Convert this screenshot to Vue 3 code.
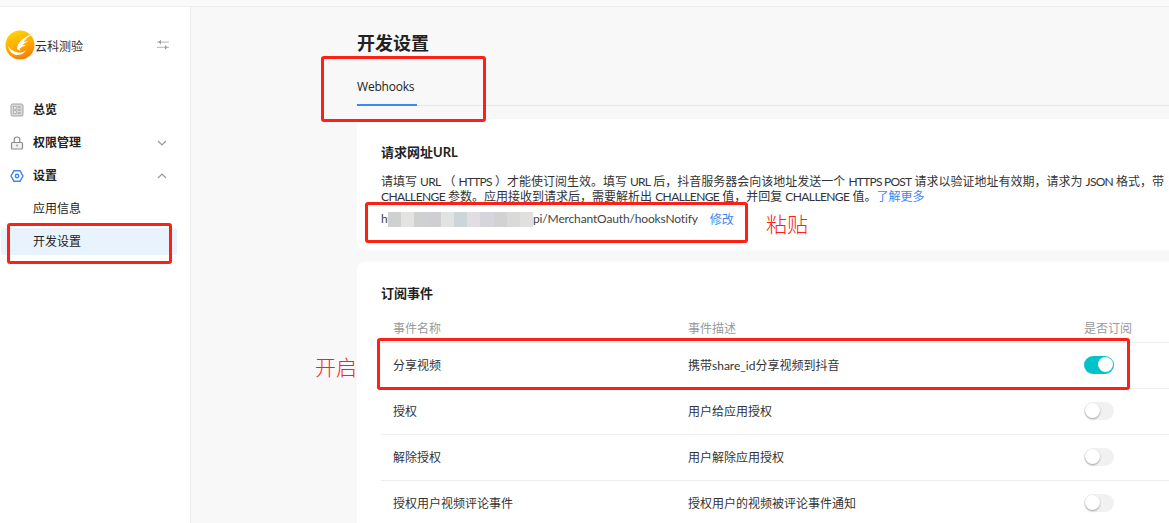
<script setup>
const mosaic = ['#cfd0d0', '#e3e4e2', '#cfd0d0', '#d0ced3', '#e1e3e1', '#ccd6d8', '#e2dde2', '#d7d5dc', '#d2d2d2', '#dadada', '#e0e0de']
const rows = [
  { name: '分享视频', desc: '携带share_id分享视频到抖音', on: true },
  { name: '授权', desc: '用户给应用授权', on: false },
  { name: '解除授权', desc: '用户解除应用授权', on: false },
  { name: '授权用户视频评论事件', desc: '授权用户的视频被评论事件通知', on: false }
]
</script>

<template>
  <div class="page">
    <div class="topbar"></div>
    <div class="body">
      <aside class="side">
        <div class="brand">
          <svg class="logo" viewBox="0 0 30 30" width="30" height="30">
            <defs>
              <linearGradient id="lg" x1="0.3" y1="0" x2="0.7" y2="1">
                <stop offset="0" stop-color="#ffd400" />
                <stop offset="0.55" stop-color="#ffa800" />
                <stop offset="1" stop-color="#f47a00" />
              </linearGradient>
            </defs>
            <circle cx="15" cy="15" r="14.500" fill="url(#lg)" />
            <path d="M3 16c3 4 6 6 10 6.500 3 .3 6-.5 8-2-2 3-5.500 5-9.500 4.500C7.500 24.500 4 21 3 16z" fill="#fff" />
            <path d="M12 19c0-6 5-11 15-15-4 3-7 5.500-8.500 8.500 1.500-.8 3-1.200 5-1.200-2.500 1-4.500 2.200-6 3.700 1.200 0 2.500 0 3.500 .5-2.500 .5-5 1.500-6.500 3.500 1 .6 1 1.200 .5 1.700-1.500-.4-3-1.200-3-2.700z" fill="#fff" />
          </svg>
          <span class="brand-name">云科测验</span>
          <svg class="swap" viewBox="0 0 14 12" width="14" height="12">
            <path d="M1 2.500h12v1.200H1zM1 7.800h12V9H1z" fill="#c4c4c4" />
            <path d="M2.500 3.100L5 .8v4.600zM11.500 8.400L9 6.100v4.600z" fill="#9a9a9a" />
          </svg>
        </div>
        <nav class="menu">
          <div class="item strong">
            <svg class="ico" viewBox="0 0 14 14" width="14" height="14">
              <rect x="1" y="1" width="12" height="12" rx="1.500" fill="#d9d9d9" stroke="#a3a3a3" />
              <path d="M3.500 3.500h2.800v2.800H3.500zM3.500 7.700h2.800v2.800H3.500z" fill="#f4f4f4" stroke="#8f8f8f" stroke-width=".6" />
              <path d="M7.800 4h2.800M7.800 7h2.800M7.800 10h2.800" stroke="#8f8f8f" />
            </svg>
            <span>总览</span>
          </div>
          <div class="item strong">
            <svg class="ico" viewBox="0 0 14 14" width="14" height="14" fill="none" stroke="#8c8c8c" stroke-width="1.200">
              <rect x="1.500" y="6.500" width="11" height="6.500" rx="1" fill="#f2f2f2" />
              <path d="M4.200 6.500V3.800a2.800 2.800 0 0 1 5.600 0v2.700" />
              <path d="M7 8.500v2" />
            </svg>
            <span>权限管理</span>
            <svg class="chev" viewBox="0 0 10 6" width="10" height="6" fill="none" stroke="#9a9a9a" stroke-width="1.200"><path d="M1 1l4 4 4-4" /></svg>
          </div>
          <div class="item strong">
            <svg class="ico" viewBox="0 0 14 14" width="14" height="14" fill="none" stroke="#3e86f5" stroke-width="1.400">
              <path d="M4 1.800h6L13 7l-3 5.200H4L1 7z" />
              <circle cx="7" cy="7" r="1.700" />
            </svg>
            <span>设置</span>
            <svg class="chev" viewBox="0 0 10 6" width="10" height="6" fill="none" stroke="#9a9a9a" stroke-width="1.200"><path d="M1 5l4-4 4 4" /></svg>
          </div>
          <div class="item sub">应用信息</div>
          <div class="item sub active">开发设置</div>
        </nav>
      </aside>

      <main class="main">
        <h1 class="title">开发设置</h1>
        <div class="tabs"><span class="tab">Webhooks</span></div>

        <section class="card url-card">
          <h2 class="card-title">请求网址URL</h2>
          <p class="desc first">请填写 <span class="en">URL</span> （ <span class="en">HTTPS</span> ）才能使订阅生效。填写 <span class="en">URL</span> 后，抖音服务器会向该地址发送一个 <span class="en">HTTPS POST</span> 请求以验证地址有效期，请求为 <span class="en">JSON</span> 格式，带</p>
          <p class="desc"><span class="en">CHALLENGE</span> 参数。应用接收到请求后，需要解析出 <span class="en">CHALLENGE</span> 值，并回复 <span class="en">CHALLENGE</span> 值。<a class="link">了解更多</a></p>
          <div class="url">
            <span class="ht">ht</span>
            <span class="mosaic"><i v-for="(c, i) in mosaic" :key="i" :style="{ background: c }"></i></span>
            <span class="path">pi/MerchantOauth/hooksNotify</span>
            <a class="link edit">修改</a>
          </div>
        </section>

        <section class="card events">
          <h2 class="card-title">订阅事件</h2>
          <div class="row head">
            <span class="c1">事件名称</span><span class="c2">事件描述</span><span class="c3">是否订阅</span>
          </div>
          <div class="row" v-for="r in rows" :key="r.name">
            <span class="c1">{{ r.name }}</span>
            <span class="c2">{{ r.desc }}</span>
            <span class="c3"><span class="switch" :class="{ on: r.on }"><b></b></span></span>
          </div>
        </section>
      </main>
    </div>

    <div class="mark m1"></div>
    <div class="mark m2"></div>
    <div class="mark m3"></div>
    <div class="mark m4"></div>
    <span class="note n1">粘贴</span>
    <span class="note n2">开启</span>
  </div>
</template>

<style>
html, body { margin: 0; background: #fff; overflow: hidden; }
</style>

<style scoped>
.page {
  position: relative;
  width: 1169px;
  height: 523px;
  overflow: hidden;
  font-family: Lato, "Noto Sans CJK SC", sans-serif;
  font-size: 12px;
  color: #222;
  background: #f8f8f8;
}
.topbar { height: 6px; background: #fafafa; border-bottom: 1px solid #eeeeee; }
.body { display: flex; height: 516px; }
.side {
  width: 191px;
  flex: none;
  box-sizing: border-box;
  background: #fff;
  border-right: 1px solid #eeeeee;
}
.brand { display: flex; align-items: center; height: 30px; margin-top: 23px; padding: 0 20px 0 5px; }
.logo { flex: none; }
.brand-name { flex: 1; color: #333; }
.menu { margin-top: 33px; padding: 0 13px 0 1px; }
.item { display: flex; align-items: center; height: 33px; box-sizing: border-box; padding-left: 9px; color: #222; }
.item.strong { font-weight: 700; }
.ico { margin-right: 9px; flex: none; }
.item span { flex: 1; padding-bottom: 2px; }
.chev { margin-right: 10px; }
.item.sub { padding-left: 32px; padding-bottom: 2px; }
.item.active { height: 27px; margin-top: 3px; background: #e9f3fd; border-radius: 3px; }
.main { flex: 1; min-width: 0; padding-left: 166px; }
.title { margin: 0; padding-top: 25px; font-size: 18px; line-height: 22px; font-weight: 700; color: #222; height: 22px; }
.tabs { margin-top: 15px; height: 37px; box-sizing: border-box; border-bottom: 1px solid #e8e8e8; }
.tab { display: inline-block; height: 37px; box-sizing: border-box; padding-top: 9px; line-height: 17px; width: 60px; border-bottom: 2px solid #3e86f5; font-family: "Open Sans", sans-serif; font-size: 12px; letter-spacing: -0.2px; color: #222; white-space: nowrap; }
.card { background: #fff; border-radius: 8px 0 0 8px; padding-left: 24px; }
.url-card { margin-top: 13px; height: 131px; box-sizing: border-box; padding-top: 24px; }
.card-title { margin: 0 0 13px; font-size: 13px; line-height: 18px; font-weight: 700; color: #222; }
.desc { margin: 0; line-height: 15px; white-space: nowrap; color: #333; }
.en { letter-spacing: -0.6px; }
.first .en { letter-spacing: -0.75px; }
.link { color: #3e86f5; }
.url { display: flex; align-items: center; height: 18px; margin-top: 6px; color: #444; white-space: nowrap; }
.ht { width: 7px; padding-bottom: 2px; }
.mosaic { display: flex; width: 145px; height: 15px; }
.mosaic i { flex: 1; display: block; }
.path { letter-spacing: -0.15px; padding-bottom: 2px; }
.edit { margin-left: 12px; padding-bottom: 2px; }
.events { margin-top: 12px; height: 300px; box-sizing: border-box; padding-top: 22px; }
.events .card-title { margin-bottom: 17px; }
.row { display: flex; align-items: center; height: 46px; padding-left: 12px; border-bottom: 1px solid #eeeeee; box-sizing: border-box; color: #333; white-space: nowrap; }
.row.head { height: 24px; padding-bottom: 4px; color: #999; }
.c1 { width: 295px; flex: none; padding-bottom: 2px; }
.c2 { width: 396px; flex: none; padding-bottom: 2px; }
.c3 { flex: none; display: flex; }
.head .c3 { padding-bottom: 2px; }
.switch { position: relative; display: block; width: 30px; height: 18px; margin-bottom: 2px; border-radius: 9px; background: #f1f1f1; }
.switch b { position: absolute; top: 1px; left: 1px; width: 15px; height: 15px; border-radius: 50%; background: #fff; box-shadow: 0 1px 2px rgba(0, 0, 0, .35); }
.switch.on { background: #02c3ca; }
.switch.on b { left: 14px; box-shadow: none; }
.mark { position: absolute; box-sizing: border-box; border: 3px solid #ff2015; border-radius: 3px; pointer-events: none; }
.m1 { left: 321px; top: 56px; width: 165px; height: 66px; }
.m2 { left: 365px; top: 202px; width: 383px; height: 41px; }
.m3 { left: 377px; top: 338px; width: 753px; height: 52px; }
.m4 { left: 7px; top: 223px; width: 165px; height: 41px; }
.note { position: absolute; font-size: 21px; line-height: 24px; color: #ff2015; font-family: "Noto Sans CJK SC", sans-serif; font-weight: 300; }
.n1 { left: 766px; top: 211px; }
.n2 { left: 315px; top: 354px; }
</style>
